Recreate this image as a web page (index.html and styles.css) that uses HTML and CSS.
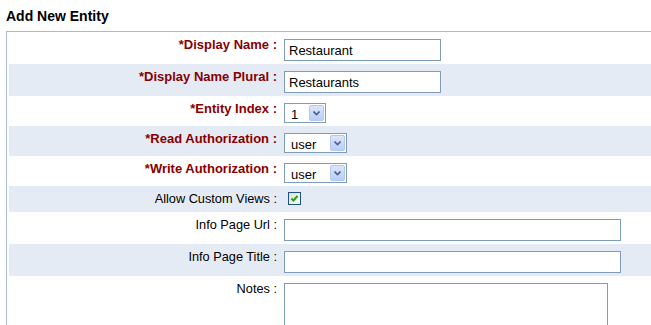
FILE: index.html
```html
<!DOCTYPE html>
<html lang="en">
<head>
  <meta charset="UTF-8">
  <title>Add New Entity</title>
  <link rel="stylesheet" href="styles.css">
</head>
<body>

  <h2 class="page-title">Add New Entity</h2>

  <div class="panel">
    <table class="form-table">
      <tr>
        <td class="label required">*Display Name :</td>
        <td class="field"><input type="text" class="text-short" value="Restaurant"></td>
      </tr>
      <tr class="alt">
        <td class="label required">*Display Name Plural :</td>
        <td class="field"><input type="text" class="text-short" value="Restaurants"></td>
      </tr>
      <tr>
        <td class="label required">*Entity Index :</td>
        <td class="field">
          <span class="select-wrap small">
            <select><option>1</option><option>2</option><option>3</option></select>
            <span class="arrow"><svg width="7" height="5" viewBox="0 0 7 5"><path d="M0.5 0.5 L3.5 3.5 L6.5 0.5" fill="none" stroke="#4d6185" stroke-width="1.6"/></svg></span>
          </span>
        </td>
      </tr>
      <tr class="alt">
        <td class="label required">*Read Authorization :</td>
        <td class="field">
          <span class="select-wrap">
            <select><option>user</option><option>admin</option></select>
            <span class="arrow"><svg width="7" height="5" viewBox="0 0 7 5"><path d="M0.5 0.5 L3.5 3.5 L6.5 0.5" fill="none" stroke="#4d6185" stroke-width="1.6"/></svg></span>
          </span>
        </td>
      </tr>
      <tr>
        <td class="label required">*Write Authorization :</td>
        <td class="field">
          <span class="select-wrap">
            <select><option>user</option><option>admin</option></select>
            <span class="arrow"><svg width="7" height="5" viewBox="0 0 7 5"><path d="M0.5 0.5 L3.5 3.5 L6.5 0.5" fill="none" stroke="#4d6185" stroke-width="1.6"/></svg></span>
          </span>
        </td>
      </tr>
      <tr class="alt">
        <td class="label">Allow Custom Views :</td>
        <td class="field">
          <span class="check-wrap">
            <input type="checkbox" checked>
            <svg class="tick" width="9" height="9" viewBox="0 0 9 9"><path d="M1.5 4.5 L3.5 6.5 L7.5 2" fill="none" stroke="#21a121" stroke-width="2"/></svg>
          </span>
        </td>
      </tr>
      <tr>
        <td class="label">Info Page Url :</td>
        <td class="field"><input type="text" class="text-long"></td>
      </tr>
      <tr class="alt">
        <td class="label">Info Page Title :</td>
        <td class="field"><input type="text" class="text-long"></td>
      </tr>
      <tr>
        <td class="label">Notes :</td>
        <td class="field"><textarea rows="4"></textarea></td>
      </tr>
    </table>
  </div>

</body>
</html>
```
FILE: styles.css
```css
html, body {
  overflow: hidden;
}

body {
  font-family: "Liberation Sans", Arial, sans-serif;
  font-size: 12px;
  background: #fff;
  margin: 0;
  padding: 0 0 0 6px;
}

.page-title {
  font-size: 14px;
  font-weight: bold;
  line-height: 16px;
  margin: 0;
  padding: 8px 0 7px 0;
  color: #000;
}

.panel {
  border-top: 1px solid #a9bbcc;
  border-left: 1px solid #a9bbcc;
  padding-left: 2px;
}

.form-table {
  width: 100%;
  border-collapse: collapse;
}

.form-table td {
  padding: 0;
  vertical-align: top;
}

.form-table tr.alt td {
  background: #e5ebf5;
}

.label {
  width: 268px;
  text-align: right;
  padding: 5px 3px 0 0 !important;
  color: #000;
  white-space: nowrap;
  font-size: 12.75px;
  line-height: 15px;
}

.label.required {
  color: #880000;
  font-weight: bold;
  font-size: 13px;
}

.field {
  padding: 7px 0 3px 4px !important;
}

input[type="text"], textarea {
  font-family: "Liberation Sans", Arial, sans-serif;
  font-size: 13px;
  border: 1px solid #7f9db9;
  margin: 0;
  padding: 2px 4px;
  height: 22px;
  box-sizing: border-box;
  display: block;
  background: #fff;
}

.text-short {
  width: 157px;
}

.text-long {
  width: 337px;
}

textarea {
  width: 324px;
  height: 70px;
  resize: none;
}

.select-wrap {
  position: relative;
  display: block;
  width: 63px;
  height: 20px;
}

.select-wrap.small {
  width: 42px;
}

.select-wrap select {
  appearance: none;
  -webkit-appearance: none;
  width: 100%;
  height: 20px;
  box-sizing: border-box;
  border: 1px solid #7f9db9;
  background: #fff;
  font-family: "Liberation Sans", Arial, sans-serif;
  font-size: 13px;
  padding: 3px 0 0 6px;
  margin: 0;
  color: #000;
  border-radius: 0;
}

.select-wrap .arrow {
  position: absolute;
  top: 2px;
  right: 2px;
  width: 15px;
  height: 16px;
  box-sizing: border-box;
  border: 1px solid #b5c8f2;
  border-radius: 2px;
  background: linear-gradient(#dce6fd, #b9cdf8);
  display: flex;
  align-items: center;
  justify-content: center;
  pointer-events: none;
}

.check-wrap {
  position: relative;
  display: block;
  width: 13px;
  height: 13px;
  margin: -1px 0 4px 4px;
}

.check-wrap input {
  appearance: none;
  -webkit-appearance: none;
  width: 13px;
  height: 13px;
  margin: 0;
  border: 1px solid #1c5180;
  background: linear-gradient(135deg, #dcdcd7, #fff);
  display: block;
}

.check-wrap .tick {
  position: absolute;
  top: 2px;
  left: 2px;
  pointer-events: none;
}
```
